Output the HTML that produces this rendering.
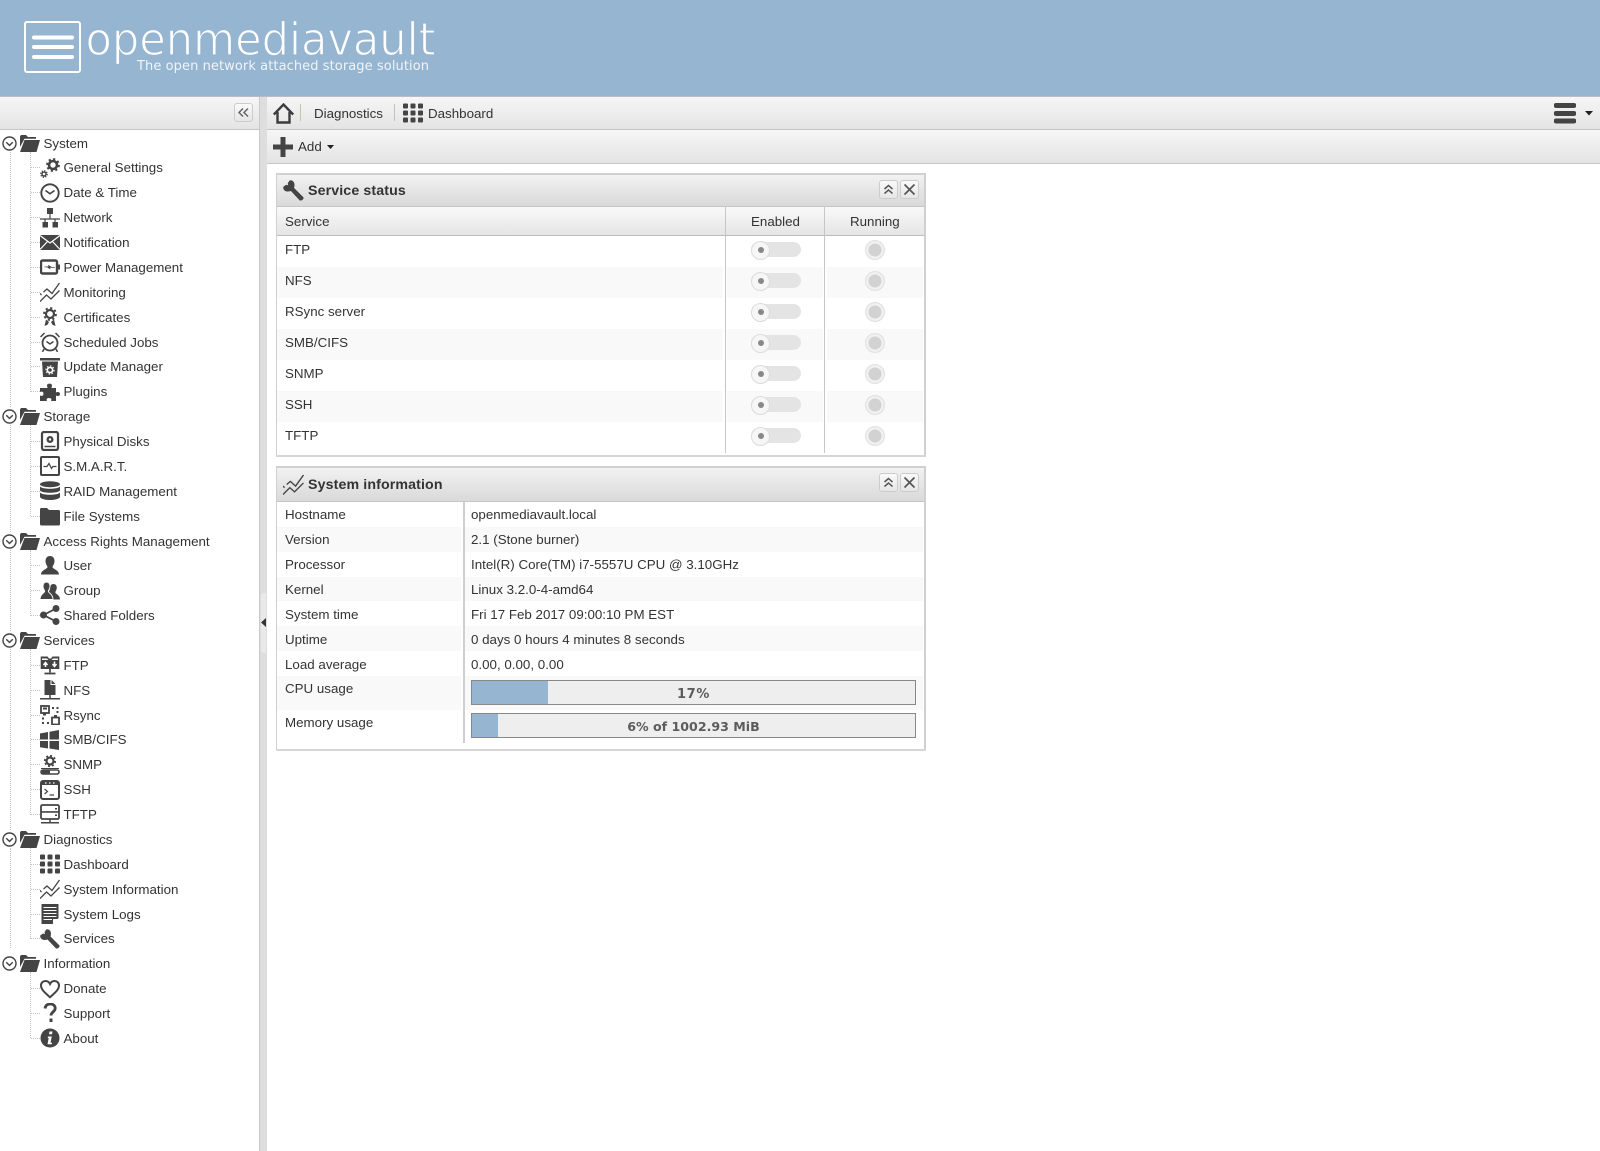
<!DOCTYPE html>
<html lang="en">
<head>
<meta charset="utf-8">
<title>openmediavault</title>
<style>
html,body{margin:0;padding:0;background:#fff}
body{width:1600px;height:1151px;position:relative;overflow:hidden;font-family:"Liberation Sans",sans-serif;font-size:13.35px;color:#333}
.a{position:absolute}
#hd{left:0;top:0;width:1600px;height:96px;background:#96b5d0}
#hl{left:0;top:96px;width:1600px;height:1px;background:#b9bcc4}
.tb{background:linear-gradient(#f6f6f6,#e4e4e4)}
.sep{width:1px;height:17px;background:#c9c3ae}
.t{position:absolute;white-space:nowrap}
.row{position:absolute;left:0;width:259px;height:24.87px;line-height:24.87px;white-space:nowrap}
.row svg{position:absolute;color:#444}
.row .ic{left:40px;top:2.4px;width:20px;height:20px}
.row .fo{left:20px;top:3px;width:20px;height:20px}
.row .ex{left:2.2px;top:5px;width:15px;height:15px}
.row span{position:absolute;left:63.5px;top:1px}
.row.g span{left:43.5px}
.row.c:before{content:"";position:absolute;left:31px;top:12px;width:9px;border-top:1px dotted #c4c4c4}
.v{position:absolute;width:0;border-left:1px dotted #c4c4c4}
.ph{position:absolute;left:276px;width:650px;background:linear-gradient(#f2f2f2,#d9d9d9);border-bottom:1px solid #c6c6c6;box-sizing:border-box}
.pt{position:absolute;left:308px;font-weight:bold;font-size:14.2px;letter-spacing:.12px;color:#333;white-space:nowrap}
.btn{position:absolute;width:17px;height:17px;border:1px solid #ccc;border-radius:3px;background:linear-gradient(#fafafa,#e6e6e6)}
.btn svg{position:absolute;left:1px;top:1px;width:15px;height:15px}
.col{position:absolute;background:#c6c6c6;width:1px}
.alt{position:absolute;background:#f9f9f9}
.tg{position:absolute;left:751px;width:50px;height:15px;border-radius:8px;background:#e4e4e4}
.kn{position:absolute;left:751px;width:17px;height:17px;border-radius:50%;background:#f6f6f6;border:1px solid #dcdcdc}
.kn:after{content:"";position:absolute;left:5.5px;top:5.5px;width:6px;height:6px;border-radius:50%;background:#888}
.rd{position:absolute;left:865px;width:18px;height:18px;border-radius:50%;background:#d2d2d2;border:1px solid #e2e2e2;box-shadow:inset 0 0 0 2.5px #f1f1f1}
.pb{position:absolute;left:471px;width:443px;height:23px;border:1px solid #888;background:#eee;text-align:center;font-family:"DejaVu Sans",sans-serif;font-weight:bold;font-size:12.6px;line-height:25px;color:#5c5c5c}
.pf{position:absolute;left:0;top:0;height:23px;background:#96b5d0}
.pb b{position:relative}
</style>
</head>
<body>
<svg width="0" height="0" style="position:absolute">
<defs>
<symbol id="ex" viewBox="0 0 15 15"><circle cx="7.5" cy="7.5" r="6.5" fill="none" stroke="currentColor" stroke-width="1.4"/><path d="M4.2 6.2 7.5 9.4l3.3-3.2" fill="none" stroke="currentColor" stroke-width="1.4"/></symbol>
<symbol id="fo" viewBox="0 0 20 20"><path d="M0 13V2.500L1 1h5l2 2h8v1.800H4.500z" fill="currentColor"/><path d="M4.500 6H20l-3.500 12H0z" fill="currentColor"/></symbol>
<symbol id="gear" viewBox="0 0 20 20"><circle cx="13" cy="7" r="4" fill="none" stroke="currentColor" stroke-width="2.600"/><circle cx="13" cy="7" r="6" fill="none" stroke="currentColor" stroke-width="1.800" stroke-dasharray="2.200 2.500"/><circle cx="4" cy="16" r="2" fill="none" stroke="currentColor" stroke-width="1.500"/><circle cx="4" cy="16" r="3.300" fill="none" stroke="currentColor" stroke-width="1.200" stroke-dasharray="1.300 1.300"/></symbol>
<symbol id="clock" viewBox="0 0 20 20"><circle cx="10" cy="10" r="8.700" fill="none" stroke="currentColor" stroke-width="1.900"/><path d="M5.500 7.500 10 10.800l4.500-3.300" fill="none" stroke="currentColor" stroke-width="1.600"/></symbol>
<symbol id="net" viewBox="0 0 20 20"><path d="M7 0h6v6H7zM2.500 14h5.500v5.500H2.500zM12.500 14h5.500v5.500h-5.500z" fill="currentColor"/><path d="M10 6v5M0 11h20M5 11v3M15 11v3" fill="none" stroke="currentColor" stroke-width="1.200"/></symbol>
<symbol id="mail" viewBox="0 0 20 20"><path d="M0 3h20v15H0z" fill="currentColor"/><path d="M0 3.500 10 11l10-7.500M0 17.500l7.500-8M20 17.500l-7.500-8" fill="none" stroke="#fff" stroke-width="1.200"/></symbol>
<symbol id="pow" viewBox="0 0 20 20"><rect x="1" y="3.500" width="16" height="13" rx="1.500" fill="none" stroke="currentColor" stroke-width="2.400"/><path d="M18 7.500h2v5h-2zM4.500 9.500h4l-.5-1.800 3.800 2.300h3v.8H10l.5 1.800L7 10.300H4.500z" fill="currentColor"/></symbol>
<symbol id="mon" viewBox="0 0 20 20"><path d="M0 19.500 6.500 13l4.500 4 8.500-8.500M0 11.500l1.500 1.500M3.500 10 7 7l5 4.500L19.500 1" fill="none" stroke="currentColor" stroke-width="1.300"/></symbol>
<symbol id="cert" viewBox="0 0 20 20"><circle cx="10" cy="7" r="4" fill="none" stroke="currentColor" stroke-width="2.200"/><circle cx="10" cy="7" r="6" fill="none" stroke="currentColor" stroke-width="1.800" stroke-dasharray="2.200 2.500"/><path d="M6 12.500 4.500 19l3-1.200L9 15zM14 12.500l1.500 6.500-3-1.200L11 15z" fill="currentColor"/></symbol>
<symbol id="alarm" viewBox="0 0 20 20"><circle cx="10" cy="11" r="7.500" fill="none" stroke="currentColor" stroke-width="1.800"/><path d="M6.500 9.500 10 12l3.500-2.500" fill="none" stroke="currentColor" stroke-width="1.400"/><path d="M0.500 5 4.500 1M19.500 5 15.500 1" fill="none" stroke="currentColor" stroke-width="1.500"/><path d="M4 17 2.500 20M16 17l1.500 3" stroke="currentColor" stroke-width="1.500"/></symbol>
<symbol id="upd" viewBox="0 0 20 20"><path d="M0 1h20v2.500H0zM2 4.500h16L17 20H3z" fill="currentColor"/><circle cx="10" cy="13" r="2.600" fill="none" stroke="#fff" stroke-width="1.600"/><circle cx="10" cy="13" r="4" fill="none" stroke="#fff" stroke-width="1.200" stroke-dasharray="1.500 1.600"/></symbol>
<symbol id="plug" viewBox="0 0 20 20"><path d="M7 3.500C7 1 12 1 12 3.500c0 1-.5 1.500-.5 2.500H16v4.500c1-.8 4-1 4 1.500s-3 2.300-4 1.500V19h-5c.8-1.500.5-3-2-3s-2.800 1.500-2 3H0v-5.500c1.500.8 3.500.5 3.500-1.800S1.500 9.200 0 10V6h7.500C7.500 5 7 4.500 7 3.500z" fill="currentColor"/></symbol>
<symbol id="disk" viewBox="0 0 20 20"><rect x="2" y="1" width="16" height="18" rx="2" fill="none" stroke="currentColor" stroke-width="2.200"/><circle cx="10" cy="8.500" r="3.500" fill="currentColor"/><circle cx="10" cy="8.500" r="1.200" fill="#fff"/><path d="M4.500 15.500h11" stroke="currentColor" stroke-width="1.500"/></symbol>
<symbol id="smart" viewBox="0 0 20 20"><rect x="1" y="1" width="18" height="18" rx="1" fill="none" stroke="currentColor" stroke-width="2"/><path d="M3.500 10.500H7l2-3 2.500 5 1.500-2h3.500" fill="none" stroke="currentColor" stroke-width="1.200"/></symbol>
<symbol id="raid" viewBox="0 0 20 20"><ellipse cx="10" cy="3.200" rx="10" ry="3" fill="currentColor"/><path d="M0 5.500C2 8.500 18 8.500 20 5.500v4C18 12.500 2 12.500 0 9.500zM0 11.500c2 3 18 3 20 0v4.500c-2 4-18 4-20 0z" fill="currentColor"/></symbol>
<symbol id="fs" viewBox="0 0 20 20"><path d="M0 3.500C0 2.500.5 2 1.500 2h5.500l2 2h9.500c1 0 1.500.5 1.500 1.500V18c0 1-.5 1.500-1.500 1.500h-17C.5 19.500 0 19 0 18z" fill="currentColor"/></symbol>
<symbol id="user" viewBox="0 0 20 20"><path d="M10 0c3 0 4.500 2.300 4.500 5S13 9.500 12.500 11c0 2 6.500 3 6.500 7.500H1c0-4.500 6.500-5.500 6.500-7.500C7 9.500 5.500 7.700 5.500 5S7 0 10 0z" fill="currentColor"/></symbol>
<symbol id="grp" viewBox="0 0 20 20"><path d="M13.500 3c2.200 0 3.300 1.700 3.300 3.700 0 2-1.300 3.300-1.500 4.500 0 1.700 4.700 2.600 4.700 7.300h-8c0-5-3.500-6.300-3.500-7.300.8-1.300 1.500-2.800 1.500-4.500 0-2 1.300-3.700 3.500-3.700z" fill="currentColor"/><path d="M6.500 1c2.300 0 3.500 2 3.500 4.200 0 2.200-1.300 3.800-1.700 5 0 1.800 4.700 2.500 4.700 8.300H0c0-5.800 4.700-6.500 4.700-8.300C4.300 9 3 7.400 3 5.200 3 3 4.200 1 6.500 1z" fill="currentColor" stroke="#fff" stroke-width=".9"/></symbol>
<symbol id="share" viewBox="0 0 20 20"><circle cx="3.500" cy="10" r="3.500" fill="currentColor"/><circle cx="16" cy="3.500" r="3.500" fill="currentColor"/><circle cx="16" cy="16.500" r="3.500" fill="currentColor"/><path d="M3.500 10 16 3.500M3.500 10 16 16.500" stroke="currentColor" stroke-width="1.800"/></symbol>
<symbol id="ftp" viewBox="0 0 20 20"><path d="M0.700 1.500h6.800l1.500 2h2l1.500-2h6.800V14H.7z" fill="currentColor"/><path d="M2 3.500h5L8.500 5H2zM18 3.500h-5L11.500 5H18z" fill="#fff"/><path d="M5.500 12V8M3.500 10 5.500 7.500l2 2.500M14.500 6.500V11M12.500 9l2 2.500 2-2.500" fill="none" stroke="#fff" stroke-width="1.500"/><path d="M10 14v3.500M4.500 18.500h11" stroke="currentColor" stroke-width="1.700"/></symbol>
<symbol id="nfs" viewBox="0 0 20 20"><path d="M4.500 0h7l4 4v11h-11z" fill="currentColor"/><path d="M11 0v4.500h4.500" fill="none" stroke="#fff" stroke-width="1"/><path d="M10 15v3M0 18.800h20" stroke="currentColor" stroke-width="1.500"/></symbol>
<symbol id="rsy" viewBox="0 0 20 20"><rect x="1" y="1" width="8" height="7" fill="none" stroke="currentColor" stroke-width="1.800"/><path d="M3 2.500h4v2H3zM3 8.500h3v2H3z" fill="currentColor"/><rect x="12" y="12.500" width="7" height="7" fill="none" stroke="currentColor" stroke-width="1.800"/><path d="M14 10h3v2.500h-3zM12 2h2v2h-2zM16.500 2h2v2h-2zM16.500 6h2v2h-2zM2 12.500h2v2H2zM2 17h2v2H2zM7 17h2v2H7z" fill="currentColor"/></symbol>
<symbol id="win" viewBox="0 0 20 20"><path d="M0 3.500 8 2v7.500H0zM9.500 1.800 19 0v9.500H9.500zM0 11h8v7.500l-8-1.300zM9.500 11H19v9l-9.500-1.500z" fill="currentColor"/></symbol>
<symbol id="snmp" viewBox="0 0 20 20"><circle cx="10" cy="6" r="3.500" fill="none" stroke="currentColor" stroke-width="2.200"/><circle cx="10" cy="6" r="5.300" fill="none" stroke="currentColor" stroke-width="1.600" stroke-dasharray="2 2.150"/><rect x="1" y="15" width="18" height="4" rx="2" fill="none" stroke="currentColor" stroke-width="1.600"/><path d="M2 15h8v4H2z" fill="currentColor"/><path d="M1 13.500h18" stroke="currentColor" stroke-width="1"/></symbol>
<symbol id="ssh" viewBox="0 0 20 20"><rect x="1" y="1" width="18" height="18" rx="2" fill="none" stroke="currentColor" stroke-width="2"/><path d="M1 1.500h18v3.500H1z" fill="currentColor"/><path d="M5 3h1.500M9 3h1.500M13 3h1.500" stroke="#fff" stroke-width="1.300"/><path d="M4.500 9l3 2.500-3 2.500M9.500 15H14" fill="none" stroke="currentColor" stroke-width="1.200"/></symbol>
<symbol id="tftp" viewBox="0 0 20 20"><rect x="1" y="1" width="18" height="14" rx="1.500" fill="none" stroke="currentColor" stroke-width="1.800"/><path d="M1 7.900h18" stroke="currentColor" stroke-width="1.600"/><path d="M15 4h2v1.500h-2zM15 10.500h2V12h-2z" fill="currentColor"/><path d="M10 15v3.500M1 18.800h18" stroke="currentColor" stroke-width="1.500"/></symbol>
<symbol id="dash" viewBox="0 0 20 20"><g fill="currentColor"><rect x="0" y="0.500" width="5" height="5" rx="1"/><rect x="7.500" y="0.500" width="5" height="5" rx="1"/><rect x="15" y="0.500" width="5" height="5" rx="1"/><rect x="0" y="7.500" width="5" height="5" rx="1"/><rect x="7.500" y="7.500" width="5" height="5" rx="1"/><rect x="15" y="7.500" width="5" height="5" rx="1"/><rect x="0" y="14.500" width="5" height="5" rx="1"/><rect x="7.500" y="14.500" width="5" height="5" rx="1"/><rect x="15" y="14.500" width="5" height="5" rx="1"/></g></symbol>
<symbol id="log" viewBox="0 0 20 20"><path d="M1.500 0h17v14l-6 6h-11z" fill="currentColor"/><path d="M3.500 3.500h13M3.500 6.500h13M3.500 9.500h13M3.500 12.500h13M3.500 15.500H12" stroke="#fff" stroke-width="1"/><path d="M13 19.500V15h5.500z" fill="#fff"/></symbol>
<symbol id="wr" viewBox="0 0 20 20"><path d="M6.500.2 4.500 3 5 5 3 4.500.2 6.500C0 10 3 12 7.500 10.500L16 19.500c2 .5 4-1.500 3.500-3L10.500 7.500C12 3 10 0 6.500.2z" fill="currentColor"/></symbol>
<symbol id="heart" viewBox="0 0 20 20"><path d="M10 18.200C4 13 1 10 1 6.500 1 3.500 3.300 2 5.500 2 7.500 2 9 3 10 5c1-2 2.500-3 4.500-3C16.700 2 19 3.500 19 6.500c0 3.500-3 6.500-9 11.700z" fill="none" stroke="currentColor" stroke-width="2"/></symbol>
<symbol id="q" viewBox="0 0 20 20"><path d="M5 5.500C5.500 2 8 1 10.200 1c3 0 5 1.800 5 4.300 0 3.500-4.200 3.800-4.200 7.200" fill="none" stroke="currentColor" stroke-width="2.800"/><path d="M9.500 15.500h3v3.500h-3z" fill="currentColor"/></symbol>
<symbol id="info" viewBox="0 0 20 20"><circle cx="10" cy="10" r="9.500" fill="currentColor"/><path d="M9.500 3.500h3l-.5 2.800H9zM8 8.500h3.800l-1.300 6.300h1.500v1.500H7.500l1.200-6.300H7.700z" fill="#fff"/></symbol>
<symbol id="up2" viewBox="0 0 15 15"><path d="M3.500 7 7.500 3.500 11.500 7M3.500 11.500l4-3.500 4 3.500" fill="none" stroke="#555" stroke-width="1.500"/></symbol>
<symbol id="xx" viewBox="0 0 15 15"><path d="M2.500 2.500l10 10M12.500 2.500l-10 10" fill="none" stroke="#555" stroke-width="1.700"/></symbol>
</defs>
</svg>

<!-- Header -->
<div id="hd" class="a"></div>
<div id="hl" class="a"></div>
<svg class="a" style="left:0;top:0" width="500" height="96">
  <rect x="25" y="22" width="55" height="50" rx="2" fill="none" stroke="#fff" stroke-width="2"/>
  <path d="M34 37.500h38M34 47h38M34 57h38" stroke="#fff" stroke-width="4" stroke-linecap="round"/>
  <text x="85.500" y="55" font-family="DejaVu Sans" font-size="45" fill="#fff" stroke="#96b5d0" stroke-width="1.300" textLength="350" lengthAdjust="spacingAndGlyphs">openmediavault</text>
  <text x="137" y="70" font-family="DejaVu Sans" font-size="13" fill="#f0f4f8" textLength="292">The open network attached storage solution</text>
</svg>

<!-- Left panel -->
<div class="a tb" style="left:0;top:97px;width:259px;height:32px;border-bottom:1px solid #c6c6c6"></div>
<div class="a" style="left:234px;top:103px;width:17px;height:17px;border:1px solid #ccc;border-radius:3px;background:linear-gradient(#fafafa,#e6e6e6)"><svg width="17" height="17" style="position:absolute;left:0;top:0"><path d="M8 4.500 4 8.500l4 4M13 4.500l-4 4 4 4" fill="none" stroke="#666" stroke-width="1.500"/></svg></div>
<div class="a" style="left:259px;top:97px;width:8px;height:1054px;background:#dedede;border-left:1px solid #c9c9c9;box-sizing:border-box"></div>
<div class="a" style="left:261px;top:593px;width:5px;height:60px;background:#e9e9e9;border-radius:3px 0 0 3px"></div>
<svg class="a" style="left:261px;top:618px" width="6" height="10"><path d="M5 0v9L0 4.500z" fill="#333"/></svg>

<!-- Tree lines -->
<div class="v" style="left:10px;top:152px;height:255px"></div>
<div class="v" style="left:10px;top:425px;height:107px"></div>
<div class="v" style="left:10px;top:550px;height:81px"></div>
<div class="v" style="left:10px;top:649px;height:181px"></div>
<div class="v" style="left:10px;top:848px;height:100px"></div>
<div class="v" style="left:30px;top:152px;height:240px"></div>
<div class="v" style="left:30px;top:425px;height:91px"></div>
<div class="v" style="left:30px;top:550px;height:66px"></div>
<div class="v" style="left:30px;top:649px;height:166px"></div>
<div class="v" style="left:30px;top:848px;height:91px"></div>
<div class="v" style="left:30px;top:972px;height:66px"></div>

<!-- Tree -->
<div class="row g" style="top:130.6px"><svg class="ex"><use href="#ex"/></svg><svg class="fo"><use href="#fo"/></svg><span>System</span></div>
<div class="row c" style="top:155.4px"><svg class="ic"><use href="#gear"/></svg><span>General Settings</span></div>
<div class="row c" style="top:180.3px"><svg class="ic"><use href="#clock"/></svg><span>Date &amp; Time</span></div>
<div class="row c" style="top:205.2px"><svg class="ic"><use href="#net"/></svg><span>Network</span></div>
<div class="row c" style="top:230px"><svg class="ic"><use href="#mail"/></svg><span>Notification</span></div>
<div class="row c" style="top:254.9px"><svg class="ic"><use href="#pow"/></svg><span>Power Management</span></div>
<div class="row c" style="top:279.8px"><svg class="ic"><use href="#mon"/></svg><span>Monitoring</span></div>
<div class="row c" style="top:304.7px"><svg class="ic"><use href="#cert"/></svg><span>Certificates</span></div>
<div class="row c" style="top:329.5px"><svg class="ic"><use href="#alarm"/></svg><span>Scheduled Jobs</span></div>
<div class="row c" style="top:354.4px"><svg class="ic"><use href="#upd"/></svg><span>Update Manager</span></div>
<div class="row c" style="top:379.3px"><svg class="ic"><use href="#plug"/></svg><span>Plugins</span></div>
<div class="row g" style="top:404.1px"><svg class="ex"><use href="#ex"/></svg><svg class="fo"><use href="#fo"/></svg><span>Storage</span></div>
<div class="row c" style="top:429px"><svg class="ic"><use href="#disk"/></svg><span>Physical Disks</span></div>
<div class="row c" style="top:453.9px"><svg class="ic"><use href="#smart"/></svg><span>S.M.A.R.T.</span></div>
<div class="row c" style="top:478.7px"><svg class="ic"><use href="#raid"/></svg><span>RAID Management</span></div>
<div class="row c" style="top:503.6px"><svg class="ic"><use href="#fs"/></svg><span>File Systems</span></div>
<div class="row g" style="top:528.5px"><svg class="ex"><use href="#ex"/></svg><svg class="fo"><use href="#fo"/></svg><span>Access Rights Management</span></div>
<div class="row c" style="top:553.4px"><svg class="ic"><use href="#user"/></svg><span>User</span></div>
<div class="row c" style="top:578.2px"><svg class="ic"><use href="#grp"/></svg><span>Group</span></div>
<div class="row c" style="top:603.1px"><svg class="ic"><use href="#share"/></svg><span>Shared Folders</span></div>
<div class="row g" style="top:628px"><svg class="ex"><use href="#ex"/></svg><svg class="fo"><use href="#fo"/></svg><span>Services</span></div>
<div class="row c" style="top:652.8px"><svg class="ic"><use href="#ftp"/></svg><span>FTP</span></div>
<div class="row c" style="top:677.7px"><svg class="ic"><use href="#nfs"/></svg><span>NFS</span></div>
<div class="row c" style="top:702.6px"><svg class="ic"><use href="#rsy"/></svg><span>Rsync</span></div>
<div class="row c" style="top:727.4px"><svg class="ic"><use href="#win"/></svg><span>SMB/CIFS</span></div>
<div class="row c" style="top:752.3px"><svg class="ic"><use href="#snmp"/></svg><span>SNMP</span></div>
<div class="row c" style="top:777.2px"><svg class="ic"><use href="#ssh"/></svg><span>SSH</span></div>
<div class="row c" style="top:802.1px"><svg class="ic"><use href="#tftp"/></svg><span>TFTP</span></div>
<div class="row g" style="top:826.9px"><svg class="ex"><use href="#ex"/></svg><svg class="fo"><use href="#fo"/></svg><span>Diagnostics</span></div>
<div class="row c" style="top:851.8px"><svg class="ic"><use href="#dash"/></svg><span>Dashboard</span></div>
<div class="row c" style="top:876.7px"><svg class="ic"><use href="#mon"/></svg><span>System Information</span></div>
<div class="row c" style="top:901.5px"><svg class="ic"><use href="#log"/></svg><span>System Logs</span></div>
<div class="row c" style="top:926.4px"><svg class="ic"><use href="#wr"/></svg><span>Services</span></div>
<div class="row g" style="top:951.3px"><svg class="ex"><use href="#ex"/></svg><svg class="fo"><use href="#fo"/></svg><span>Information</span></div>
<div class="row c" style="top:976.2px"><svg class="ic"><use href="#heart"/></svg><span>Donate</span></div>
<div class="row c" style="top:1001px"><svg class="ic"><use href="#q"/></svg><span>Support</span></div>
<div class="row c" style="top:1025.9px"><svg class="ic"><use href="#info"/></svg><span>About</span></div>

<!-- Breadcrumb toolbar -->
<div class="a tb" style="left:267px;top:97px;width:1333px;height:32px;border-bottom:1px solid #c6c6c6"></div>
<svg class="a" style="left:273px;top:103px" width="21" height="21" viewBox="0 0 21 21"><path d="M.8 11.500 10.500 1.500l9.700 10M4.500 9v10.500h12V9" fill="none" stroke="#3c3c3c" stroke-width="2.400"/></svg>
<div class="a sep" style="left:300px;top:104px"></div>
<div class="t" style="left:314px;top:105px;line-height:17px">Diagnostics</div>
<div class="a sep" style="left:394px;top:104px"></div>
<svg class="a" style="left:403px;top:103px;color:#444" width="20" height="20"><use href="#dash"/></svg>
<div class="t" style="left:428px;top:105px;line-height:17px">Dashboard</div>
<svg class="a" style="left:1554px;top:102px" width="22" height="24"><path d="M2 3.500h18M2 11.500h18M2 19h18" stroke="#444" stroke-width="5" stroke-linecap="round"/></svg>
<svg class="a" style="left:1585px;top:111px" width="8" height="5"><path d="M0 0h8L4 4.500z" fill="#222"/></svg>

<!-- Add toolbar -->
<div class="a tb" style="left:267px;top:130px;width:1333px;height:33px;border-bottom:1px solid #c6c6c6"></div>
<svg class="a" style="left:273px;top:137px" width="20" height="20"><path d="M7.500 0h5v7.500H20v5h-7.500V20h-5v-7.500H0v-5h7.500z" fill="#444"/></svg>
<div class="t" style="left:298px;top:138px;line-height:17px">Add</div>
<svg class="a" style="left:327px;top:145px" width="7" height="5"><path d="M0 0h7L3.500 4z" fill="#222"/></svg>

<!-- Service status panel -->
<div class="ph" style="top:173px;height:34px;border-top:2px solid #d0d0d0;border-left:1px solid #d0d0d0;border-right:2px solid #d0d0d0"></div>
<svg class="a" style="left:283px;top:180px;color:#444" width="21" height="21"><use href="#wr"/></svg>
<div class="pt" style="top:183px;line-height:17px">Service status</div>
<div class="btn" style="left:879px;top:180px"><svg><use href="#up2"/></svg></div>
<div class="btn" style="left:900px;top:180px"><svg><use href="#xx"/></svg></div>
<div class="a" style="left:277px;top:207px;width:647px;height:28px;background:linear-gradient(#f9f9f9,#e5e5e5);border-bottom:1px solid #bdbdbd"></div>
<div class="t" style="left:285px;top:213px;line-height:17px">Service</div>
<div class="t" style="left:751px;top:213px;line-height:17px">Enabled</div>
<div class="t" style="left:850px;top:213px;line-height:17px">Running</div>
<div class="a" style="left:276px;top:207px;width:1px;height:250px;background:#d0d0d0"></div>
<div class="a" style="left:924px;top:207px;width:2px;height:250px;background:#d0d0d0"></div>
<div class="a" style="left:276px;top:455px;width:650px;height:2px;background:#d6d6d6"></div>
<div class="alt" style="left:277px;top:267px;width:446px;height:31px"></div>
<div class="alt" style="left:727px;top:267px;width:96px;height:31px"></div>
<div class="alt" style="left:827px;top:267px;width:96px;height:31px"></div>
<div class="alt" style="left:277px;top:329px;width:446px;height:31px"></div>
<div class="alt" style="left:727px;top:329px;width:96px;height:31px"></div>
<div class="alt" style="left:827px;top:329px;width:96px;height:31px"></div>
<div class="alt" style="left:277px;top:391px;width:446px;height:31px"></div>
<div class="alt" style="left:727px;top:391px;width:96px;height:31px"></div>
<div class="alt" style="left:827px;top:391px;width:96px;height:31px"></div>
<div class="col" style="left:725px;top:207px;height:246px"></div>
<div class="col" style="left:824px;top:207px;height:246px"></div>
<div class="t" style="left:285px;top:241px;line-height:17px">FTP</div>
<div class="t" style="left:285px;top:272px;line-height:17px">NFS</div>
<div class="t" style="left:285px;top:303px;line-height:17px">RSync server</div>
<div class="t" style="left:285px;top:334px;line-height:17px">SMB/CIFS</div>
<div class="t" style="left:285px;top:365px;line-height:17px">SNMP</div>
<div class="t" style="left:285px;top:396px;line-height:17px">SSH</div>
<div class="t" style="left:285px;top:427px;line-height:17px">TFTP</div>

<div class="tg" style="top:242px"></div><div class="kn" style="top:240.500px"></div><div class="rd" style="top:240px"></div>
<div class="tg" style="top:273px"></div><div class="kn" style="top:271.500px"></div><div class="rd" style="top:271px"></div>
<div class="tg" style="top:304px"></div><div class="kn" style="top:302.500px"></div><div class="rd" style="top:302px"></div>
<div class="tg" style="top:335px"></div><div class="kn" style="top:333.500px"></div><div class="rd" style="top:333px"></div>
<div class="tg" style="top:366px"></div><div class="kn" style="top:364.500px"></div><div class="rd" style="top:364px"></div>
<div class="tg" style="top:397px"></div><div class="kn" style="top:395.500px"></div><div class="rd" style="top:395px"></div>
<div class="tg" style="top:428px"></div><div class="kn" style="top:426.500px"></div><div class="rd" style="top:426px"></div>

<!-- System information panel -->
<div class="ph" style="top:466px;height:36px;border-top:2px solid #d0d0d0;border-left:1px solid #d0d0d0;border-right:2px solid #d0d0d0"></div>
<svg class="a" style="left:283px;top:474px;color:#444" width="21" height="21"><use href="#mon"/></svg>
<div class="pt" style="top:477px;line-height:17px">System information</div>
<div class="btn" style="left:879px;top:473px"><svg><use href="#up2"/></svg></div>
<div class="btn" style="left:900px;top:473px"><svg><use href="#xx"/></svg></div>
<div class="a" style="left:276px;top:502px;width:1px;height:249px;background:#d0d0d0"></div>
<div class="a" style="left:924px;top:502px;width:2px;height:249px;background:#d0d0d0"></div>
<div class="a" style="left:276px;top:749px;width:650px;height:2px;background:#d6d6d6"></div>
<div class="alt" style="left:277px;top:527px;width:184px;height:25px"></div>
<div class="alt" style="left:465px;top:527px;width:458px;height:25px"></div>
<div class="alt" style="left:277px;top:577px;width:184px;height:24px"></div>
<div class="alt" style="left:465px;top:577px;width:458px;height:24px"></div>
<div class="alt" style="left:277px;top:626px;width:184px;height:25px"></div>
<div class="alt" style="left:465px;top:626px;width:458px;height:25px"></div>
<div class="alt" style="left:277px;top:676px;width:184px;height:34px"></div>
<div class="alt" style="left:465px;top:676px;width:458px;height:34px"></div>
<div class="col" style="left:463px;top:502px;height:241px;width:2px;background:#cfcfcf"></div>

<div class="t" style="left:285px;top:506px;line-height:17px">Hostname</div><div class="t" style="left:471px;top:506px;line-height:17px">openmediavault.local</div>
<div class="t" style="left:285px;top:531px;line-height:17px">Version</div><div class="t" style="left:471px;top:531px;line-height:17px">2.1 (Stone burner)</div>
<div class="t" style="left:285px;top:556px;line-height:17px">Processor</div><div class="t" style="left:471px;top:556px;line-height:17px">Intel(R) Core(TM) i7-5557U CPU @ 3.10GHz</div>
<div class="t" style="left:285px;top:581px;line-height:17px">Kernel</div><div class="t" style="left:471px;top:581px;line-height:17px">Linux 3.2.0-4-amd64</div>
<div class="t" style="left:285px;top:606px;line-height:17px">System time</div><div class="t" style="left:471px;top:606px;line-height:17px">Fri 17 Feb 2017 09:00:10 PM EST</div>
<div class="t" style="left:285px;top:631px;line-height:17px">Uptime</div><div class="t" style="left:471px;top:631px;line-height:17px">0 days 0 hours 4 minutes 8 seconds</div>
<div class="t" style="left:285px;top:656px;line-height:17px">Load average</div><div class="t" style="left:471px;top:656px;line-height:17px">0.00, 0.00, 0.00</div>
<div class="t" style="left:285px;top:680px;line-height:17px">CPU usage</div>
<div class="t" style="left:285px;top:714px;line-height:17px">Memory usage</div>

<div class="pb" style="top:680px"><div class="pf" style="width:76px"></div><b style="font-size:13px;letter-spacing:.6px">17%</b></div>
<div class="pb" style="top:713px"><div class="pf" style="width:26px"></div><b>6% of 1002.93 MiB</b></div>
</body>
</html>
